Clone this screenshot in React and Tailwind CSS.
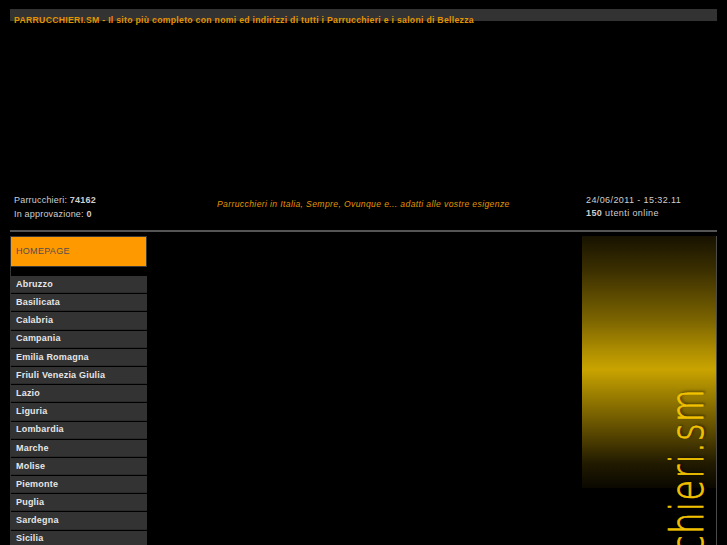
import React from "react";

const regions = [
  "Abruzzo",
  "Basilicata",
  "Calabria",
  "Campania",
  "Emilia Romagna",
  "Friuli Venezia Giulia",
  "Lazio",
  "Liguria",
  "Lombardia",
  "Marche",
  "Molise",
  "Piemonte",
  "Puglia",
  "Sardegna",
  "Sicilia",
  "Toscana",
  "Trentino Alto Adige",
  "Umbria",
  "Valle d'Aosta",
  "Veneto",
];

export default function App() {
  return (
    <div className="bg-black min-h-screen font-['Liberation_Sans',Arial,sans-serif] relative overflow-hidden h-[545px]">
      <div className="w-[707px] mx-auto pt-[9px]">
        {/* top bar */}
        <div className="h-[12px] bg-[#333333]">
          <div className="pl-[4px] pt-[6px] leading-[10px] text-[8.7px] font-bold text-[#e39400] tracking-[0.28px] whitespace-nowrap">
            PARRUCCHIERI.SM - Il sito più completo con nomi ed indirizzi di tutti i Parrucchieri e i saloni di Bellezza
          </div>
        </div>

        {/* banner area */}
        <div className="h-[172px]" />

        {/* info row */}
        <div className="flex h-[37px] text-[9px] text-[#cfcfcf] tracking-[0.2px]">
          <div className="w-[207px] pl-[4px] leading-[14px]">
            <div>
              Parrucchieri: <span className="font-bold">74162</span>
            </div>
            <div>
              In approvazione: <span className="font-bold">0</span>
            </div>
          </div>
          <div className="w-[369px] pt-[4px] leading-[14px] italic text-[#e39400] text-[8.6px] tracking-[0.37px] whitespace-nowrap">
            Parrucchieri in Italia, Sempre, Ovunque e... adatti alle vostre esigenze
          </div>
          <div className="flex-1 leading-[13px] pt-[1px] tracking-[0.4px]">
            <div>24/06/2011 - 15:32.11</div>
            <div>
              <span className="font-bold">150</span> utenti online
            </div>
          </div>
        </div>

        {/* separator */}
        <div className="h-[2px] bg-[#555555]" />

        {/* body */}
        <div className="flex mt-[4px]">
          {/* left menu */}
          <div className="w-[137px] border-l border-[#333333]">
            <div className="h-[31px] bg-[#ff9900] border border-[#3a3a3a] border-l-0 pl-[5px] flex items-center text-[9px] text-[#505050] tracking-[0.3px]">
              HOMEPAGE
            </div>
            <div className="h-[9px]" />
            <div className="flex flex-col">
              {regions.map((r) => (
                <div
                  key={r}
                  className="h-[17.2px] mb-[1px] bg-[#333333] border-b border-[#2a2a2a] pl-[5px] pt-[1px] flex items-center text-[9px] font-bold text-[#e6e6e6] tracking-[0.2px] whitespace-nowrap"
                >
                  {r}
                </div>
              ))}
            </div>
          </div>

          {/* middle */}
          <div className="flex-1" />

          {/* right */}
          <div className="w-[135px] border-r border-[#4a4a4a] min-h-[400px]">
            <div className="h-[252px] bg-[linear-gradient(to_bottom,#171200_0%,#3c3000_14%,#7a6300_33%,#b08f00_46%,#c9a400_53%,#a08200_62%,#5a4800_78%,#221b00_90%,#0a0800_100%)]" />
          </div>
        </div>
      </div>

      {/* vertical logo text */}
      <div className="absolute right-[63px] top-[388px] origin-top-right [transform:rotate(-90deg)_scaleX(0.74)] text-[46px] leading-[46px] font-light tracking-[1.5px] text-[#f2c200] [-webkit-text-stroke:0.7px_#f2c200] font-['DejaVu_Sans',sans-serif] whitespace-nowrap [text-shadow:2px_2px_3px_rgba(0,0,0,0.55)]">
        parrucchieri.sm
      </div>
    </div>
  );
}
